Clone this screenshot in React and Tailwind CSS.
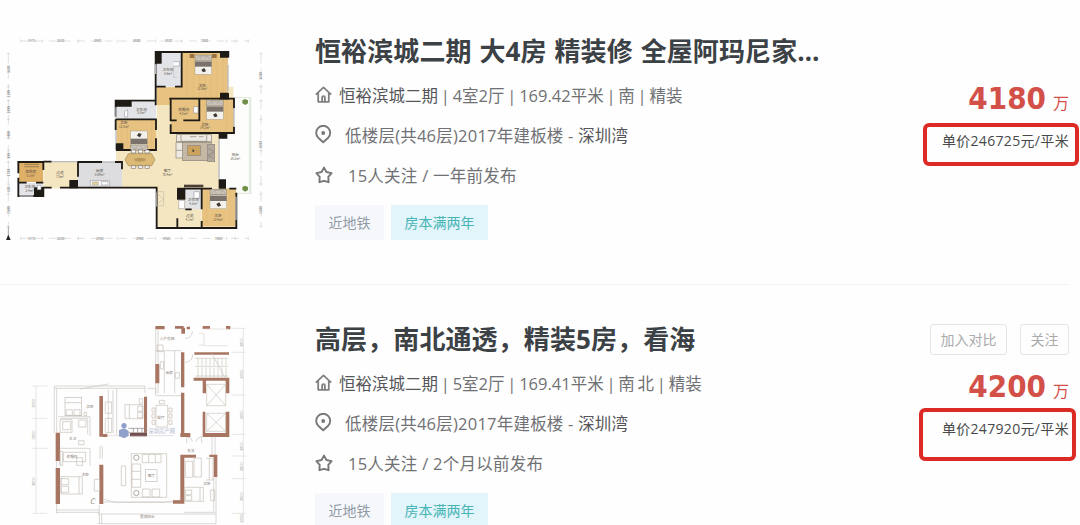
import clsx from 'clsx';

const WALL = '#1e1b17';
const WOOD = '#e7c281';
const TILE = '#e3e4e8';
const BRICK = '#a87562';

function HomeIcon() {
  return (
    <svg className="-mt-[3px] h-[17px] w-[17px] shrink-0" viewBox="0 0 17 17" fill="none" stroke="#808083" strokeWidth="1.8" strokeLinejoin="round">
      <path d="M.8 8.6 8.5 1.4 16.2 8.6M3.2 7v8.8h10.6V7" />
      <path d="M7.1 15.5v-4a1.4 1.4 0 0 1 2.8 0v4" />
    </svg>
  );
}

function PinIcon() {
  return (
    <svg className="-mt-[4px] h-[19px] w-[17px] shrink-0" viewBox="0 0 17 19" fill="none" stroke="#77777a" strokeWidth="1.9" strokeLinejoin="round">
      <path d="M8.2 17.3 3.2 12.7A7 7 0 1 1 13.2 12.7Z" />
      <circle cx="8.2" cy="8" r="1.9" fill="#77777a" stroke="none" />
    </svg>
  );
}

function StarIcon() {
  return (
    <svg className="-mt-[3px] h-[18px] w-[18px] shrink-0" viewBox="0 0 18 18" fill="none" stroke="#77777a" strokeWidth="1.9" strokeLinejoin="round">
      <path d="M9 1.6 11.4 6 16.6 7.1 13.3 10.8 13.6 16.2 9 14.8 4.4 16.2 4.7 10.8 1.4 7.1 6.6 6Z" />
    </svg>
  );
}

function Bed({ x, y, flip }) {
  return (
    <g transform={flip ? `translate(${x} ${y + 58}) scale(1 -1)` : `translate(${x} ${y})`}>
      <rect width="50" height="16" fill="#c9c3ba" stroke="#665a4a" />
      <path d="M3 13 14 3h22l11 10M14 3l5 10M36 3l-5 10" fill="none" stroke="#8d8578" />
      <rect y="17" width="50" height="41" fill="#f3f1ec" stroke="#8d8578" />
      <rect y="19" width="50" height="16" fill="#7b736b" />
      <path d="m19 44 9-5 5 10-9 3Z" fill="#3d3833" />
    </g>
  );
}

function Label({ x, y, children, size = 11, fill = '#5a5348' }) {
  return (
    <text x={x} y={y} fontSize={size} fill={fill} textAnchor="middle">{children}</text>
  );
}

function ColorPlan() {
  const ticks = [62, 128, 235, 352, 467, 545, 680, 706, 745];
  const leftTicks = [70, 170, 212, 268, 362, 396, 462, 492, 590];
  return (
    <svg className="h-[220px] w-[270px]" viewBox="0 0 810 660" fontFamily='"Noto Sans CJK SC", sans-serif'>
      <g stroke="#c3c3c3" strokeWidth="1.5">
        <path d="M62 33H745M62 625H745" strokeDasharray="24 18" />
        <path d="M25 70V590M783 70V590" strokeDasharray="30 16" />
        {ticks.map(t => <path key={t} d={`M${t} 28v10M${t} 620v10`} />)}
        {leftTicks.map(t => <path key={t} d={`M20 ${t}h10M778 ${t}h10`} />)}
      </g>
      {['1475', '2680', '2980', '2900', '1920', '3300'].map((t, i) => (
        <g key={t}>
          <Label x={[95, 182, 293, 410, 506, 613][i]} y={37} size={10} fill="#777">{t}</Label>
          <Label x={[95, 182, 300, 420, 500, 655][i]} y={629} size={10} fill="#777">{t}</Label>
        </g>
      ))}
      {[[118, '3300'], [192, '1100'], [240, '1400'], [315, '2400'], [378, '900'], [428, '1700'], [478, '800'], [540, '2500']].map(([y, t]) => (
        <text key={y} transform={`translate(29 ${y}) rotate(-90)`} fontSize="10" fill="#777" textAnchor="middle">{t}</text>
      ))}
      {[[138, '3600'], [344, '6800'], [540, '2500']].map(([y, t]) => (
        <text key={y} transform={`translate(787 ${y}) rotate(-90)`} fontSize="10" fill="#777" textAnchor="middle">{t}</text>
      ))}
      <path d="M25 590V630" stroke="#777" strokeWidth="2" />
      <path d="m25 614 7 16H18Z" fill="#222" />

      <path d="M700 203H752V490H706V475H657V310H700Z" fill="#fdfefb" stroke="#c8d6c1" strokeWidth="2" />
      <path d="M748 208V486" stroke="#e2ecdb" strokeWidth="3" />
      <g fill="#718f48">
        <path d="m735 207 9 4v9l-8 5-9-5v-9Z" />
        <path d="m735 467 9 4v9l-8 5-9-5v-9Z" />
      </g>

      <path d="M470 170H700V310H657V475H605V590H470V475H130V395H348V270H470Z" fill="#f5e6c2" />
      <path d="M545 68H684V205H510V225H470V172H545Z" fill={WOOD} />
      <rect x="470" y="68" width="75" height="102" fill={TILE} />
      <rect x="512" y="207" width="88" height="64" fill={WOOD} />
      <path d="M600 207H702V308H512V271H600Z" fill={WOOD} />
      <rect x="350" y="215" width="118" height="52" fill={TILE} />
      <rect x="350" y="270" width="118" height="88" fill={WOOD} />
      <rect x="232" y="397" width="134" height="76" fill="#dddde0" />
      <rect x="57" y="398" width="72" height="58" fill="#dfb068" />
      <rect x="57" y="459" width="72" height="38" fill={TILE} />
      <rect x="556" y="476" width="49" height="62" fill={TILE} />
      <rect x="606" y="476" width="102" height="114" fill={WOOD} />
      <g stroke="#d4a75b" strokeWidth="1" opacity=".5">
        <path d="M562 70V205M580 70V205M598 130V205M616 130V205M634 130V205M652 70V205M670 70V205M365 270V358M382 270V358M455 270V358M615 207V308M680 207V308M620 476V590M690 476V590" />
      </g>

      <g fill="none" stroke={WALL} strokeWidth="5.5">
        <path d="M467 226V66H685V82M684 190V206H508M545 66V170H525M497 170H467" />
        <path d="M347 260V212H468M347 268H468V300M347 300V268M468 325V360H432M348 360H400" />
        <path d="M512 205V271H530M550 271H598V207M658 206H702V235M702 290V309H512V283" />
        <path d="M55 430V396H130V420M55 443V498H130V473H155M55 458H80M108 458H130M180 473H470V594H709V488" />
        <path d="M366 418V396H345M306 396H234V440M130 395H155" />
        <path d="M532 476H636M688 476H709M532 594V565M556 538H575M605 594V573M605 538V476" />
      </g>
      <g fill={WALL}>
        <path d="M465 65h20v36h-20zM660 65h26v18h-26zM660 188h26v19h-26zM347 210h48v20h-48zM347 340h23v20h-23zM656 309h26v17h-26zM656 448h22v28h-22zM531 474h25v35h-25zM208 450h26v25h-26zM102 472h30v28h-30z" />
      </g>
      <g stroke="#bcbcc0" strokeWidth="4">
        <path d="M467 103V132M684 105V182M702 236V288M348 232V264M348 300V338M468 490V530M58 498H100M708 500V570M155 395H232M306 396H345M657 328V446" />
      </g>

      <Bed x={585} y={75} />
      <Bed x={620} y={210} />
      <Bed x={630} y={478} />
      <Bed x={392} y={303} flip />
      <path d="M569 72h14v12h-14zM636 72h14v12h-14z" fill="#9a7440" />

      <g>
        <path d="M385 371h70l10 18-10 18h-70l-10-18Z" fill="#dcb975" stroke="#a08a5d" strokeWidth="2" />
        <ellipse cx="420" cy="389" rx="18" ry="6" fill="#b99a5c" />
        <g fill="#fff" stroke="#777067" strokeWidth="2">
          {[394, 415, 435].map(x => <path key={x} d={`M${x} 360h13v9h-13zM${x} 407h13v8h-13z`} />)}
        </g>
      </g>

      <g stroke="#8a837b" strokeWidth="2">
        <rect x="548" y="337" width="86" height="55" fill="#c5b9a6" />
        <rect x="530" y="314" width="104" height="21" fill="#eeeae1" />
        <path d="M543 315v19h77v-19M570 320h20M597 320h14" fill="none" />
        <rect x="528" y="338" width="20" height="46" fill="#eeeae1" />
        <path d="M528 361h20" />
        <rect x="623" y="343" width="21" height="52" fill="#b3aa9d" />
        <path d="m624 355 18 9-18 12 18 10M624 385l18-18" fill="none" />
        <rect x="563" y="347" width="38" height="29" fill="#cba35e" />
        <path d="m577 358 7 4-6 5Z" fill="#333" stroke="none" />
      </g>
      <path d="M552 464h58v8h-58z" fill="#4b3e36" />

      <g fill="#fff" stroke="#85858a" strokeWidth="1.5">
        <path d="M521 95h17v13h-17M374 244l9-5v22h-9ZM581 230h13v19h-13ZM271 452h58v16h-58zM304 455h20v10h-20zM112 466h11v13h-11zM582 485h16v20h-16zM536 511h18v25h-18z" />
        <path d="M470 485h21v42h-21zM470 488l20 19-20 18M521 108v34h10" fill="none" stroke="#b5b0a6" />
      </g>
      <path d="M73 403h44M73 410h44" stroke="#a9854f" strokeWidth="4" />
      <path d="M277 456h18v9h-18z" fill="#e7d59e" stroke="#777" />

      {[
        ['卫生间', '5.6m²', 504, 123], ['主卧', '21.6m²', 607, 170], ['衣帽间', '4.2m²', 551, 244],
        ['次卧', '14.1m²', 615, 287], ['卫生间', '5.8m²', 424, 242], ['次卧', '12.5m²', 372, 283],
        ['阳台', '25.2m²', 706, 379], ['客厅', '70.4m²', 502, 427], ['厨房', '8.69m²', 299, 427],
        ['过道', '7.5m²', 180, 432], ['保姆房', '5.1m²', 92, 429], ['卫生间', '2.4m²', 89, 475],
        ['卫生间', '4.2m²', 580, 514], ['过道', '4.1m²', 569, 562], ['主卧', '13.4m²', 654, 562],
      ].map(([name, area, x, y]) => (
        <g key={`${x}-${y}`}>
          <Label x={x} y={y}>{name}</Label>
          <Label x={x} y={y + 11} size={9}>{area}</Label>
        </g>
      ))}
    </svg>
  );
}

function LinePlan() {
  return (
    <svg className="h-[223px] w-[270px]" viewBox="0 -24 810 669" fontFamily='"Noto Sans CJK SC", sans-serif'>
      <g stroke="#d3ceca" strokeWidth="1.5" fill="none">
        <path d="M108 228V610M730 55V640" />
        {[228, 325, 415, 610].map(y => <path key={y} d={`M98 ${y}h44`} />)}
        {[55, 127, 255, 373, 438, 506, 610].map(y => <path key={y} d={`M695 ${y}h42`} />)}
      </g>
      {[[106, 280], [106, 375], [106, 515], [729, 98], [729, 193], [729, 315], [729, 410], [729, 470], [729, 560], [729, 625]].map(([x, y]) => (
        <text key={`${x}-${y}`} transform={`translate(${x} ${y}) rotate(-90)`} fontSize="12" fill="#b4aeaa" textAnchor="middle">3800</text>
      ))}

      <g fill="none" stroke="#c8c4be" strokeWidth="2">
        <path d="M467 60V250M474 60V250M467 122H545M493 122V250M524 122V250M467 257H545M163 228H435M163 235H435M163 228V370M170 235V370M350 235V375M325 240V370M339 240V370M435 228V250M442 235H467V255" />
        <path d="M170 370V610M167 607H298M167 600H298M298 585V642M305 612V642M293 612H648M293 641H648M648 500V640M641 500V605M553 607H645M636 380V435M645 380V435M312 568 345 577H490L540 570M312 576H520" />
        <path d="M240 237 325 222M440 257V370M545 250V372M175 320H270V378M180 415H270V467M180 325H263M263 325V372M180 420V467" />
        <path d="M560 380v20M605 380v20M560 380q15 2 18 15M605 380q-15 2-18 15M555 85q22 0 22-22M555 157q23-2 23-24M300 408v38M307 408v38" />
      </g>

      <g fill={BRICK}>
        <path d="M466 48h28v10h-28zM525 48h26v8h-26zM544 53h11v18h-11zM560 50h10v8h-10zM608 48h22v9h-22zM678 48h13v10h-13zM466 162h12v58h-12zM543 127h10v105h-10zM583 127h104v7h-104zM543 248h10v132h-10zM581 203h107v9h-107zM608 212h10v38h-10zM677 212h11v38h-11zM608 305h8v70h-8zM677 305h11v70h-11zM608 369h80v12h-80zM541 369h30v12h-30zM298 258h11v122h-11zM432 260h9v115h-9zM309 372h13v9h-13zM167 368h13v85h-13zM167 474h13v108h-13zM298 464h12v118h-12zM541 434h47v9h-47zM541 443h12v137h-12zM519 571h34v10h-34zM641 434h11v67h-11zM628 434h18v7h-18z" />
      </g>
      <path d="M390 374H441" stroke="#744b4c" strokeWidth="10" />
      <path d="M385 355h53v13h-53M400 355v13M413 355v13M426 355v13" fill="none" stroke="#8d817c" strokeWidth="2" />

      <g fill="none" stroke="#c4bcb4" strokeWidth="2">
        <rect x="195" y="262" width="50" height="55" />
        <path d="M195 278h50M199 299h18v17h-18zM222 299h18v17h-18zM252 307h8v10h-8z" />
        <path d="M375 284h54v42h-54zM388 284v42M413 288h14v16h-14zM413 307h14v16h-14zM418 266h10v14h-10z" />
        <path d="M468 286h35v65h-35zM456 294h9v12h-9zM456 312h9v12h-9zM456 331h9v12h-9zM507 294h9v12h-9zM507 312h9v12h-9zM507 331h9v12h-9zM478 271h15v10h-15z" />
        <path d="M180 329h36v38h-36zM188 335h24v24h-24zM236 330h22v21h-22zM236 392h16v12h-16zM316 276h19v34h-19zM316 325h19v43h-19z" />
        <path d="M190 427h67v28h-67zM180 424h8v42h-8zM230 443h18v23h-18z" />
        <path d="M183 500h64v52h-64zM183 506h23v18h-23zM183 529h23v18h-23zM237 500v52M283 508h16v35h-16z" />
        <path d="M364 468h13v59h-13zM394 431h106v131h-106zM396 462h26v70h-26zM396 484h26M396 508h26M427 433h56v25h-56zM446 433v25M466 433v25M427 537h23v24h-23zM456 537h23v24h-23z" />
        <rect x="437" y="479" width="34" height="36" />
        <circle cx="409" cy="443" r="8" stroke="#8c8178" />
        <circle cx="409" cy="549" r="8" stroke="#8c8178" />
        <path d="M556 454h22v48h-22zM582 444h22v57h-22zM553 532h57v42h-57zM600 532v42M556 540h19v14h-19zM556 557h19v14h-19zM629 445h10v65h-10M618 445h10v65h-10M632 540h12v32h-12z" />
        <path d="M471 105h18v20h-18zM481 155h10v22h-10zM526 188h12v17h-12z" />
        <path d="M597 70h15v35h-15M608 107h76M610 57h75" stroke="#ddd8d2" />
      </g>
      <g stroke="#c8c5b9" strokeWidth="2" fill="none">
        <path d="M586 145H684M586 169H684M586 198H684M635 130 675 203" />
        {[594, 606, 618, 630, 642, 654, 666, 678].map(x => <path key={x} d={`M${x} 145V166M${x} 172V203`} />)}
        <path d="M620 223h57v64h-57zM620 310h57v54h-57zM620 223l57 64M677 223l-57 64M620 310l57 54M677 310l-57 54" />
      </g>

      <g fill="#8fa0cd">
        <circle cx="372" cy="347" r="8" />
        <path d="m357 360 16-5 13 8v14l-13 8-16-6Z" />
      </g>
      <Label x={485} y={368} size={16} fill="#b3b7cd">深圳房产网</Label>
      <path d="M320 377H520" stroke="#b3a7b5" />
      <text x="269" y="581" fontSize="23" fontStyle="italic" fill="#988e86">C</text>
      {[
        ['入户花园', 501, 89], ['厨房', 508, 192], ['餐厅', 483, 328], ['次卧', 270, 293],
        ['主卫', 218, 390], ['衣帽间', 216, 443], ['主卧', 256, 497], ['客厅', 454, 501],
        ['玄关', 573, 427], ['次卧', 621, 525], ['景观阳台', 442, 625],
      ].map(([name, x, y]) => <Label key={`${x}-${y}`} x={x} y={y} size={11} fill="#8c8179">{name}</Label>)}
    </svg>
  );
}

const listings = [
  {
    id: 1,
    plan: <ColorPlan />,
    title: '恒裕滨城二期 大4房 精装修 全屋阿玛尼家…',
    specs: ' | 4室2厅 | 169.42平米 | 南 | 精装',
    published: '15人关注 / 一年前发布',
    price: '4180',
    unitPrice: '单价246725元/平米',
    mark: 'top-[123px] left-[923px] h-[43px] w-[156px]',
  },
  {
    id: 2,
    plan: <LinePlan />,
    title: '高层，南北通透，精装5房，看海',
    specs: ' | 5室2厅 | 169.41平米 | 南 北 | 精装',
    published: '15人关注 / 2个月以前发布',
    price: '4200',
    unitPrice: '单价247920元/平米',
    mark: 'top-[120px] left-[919px] h-[53px] w-[157px]',
    actions: true,
  },
];

function Listing({ item }) {
  return (
    <article className="relative flex h-[288px] w-[1080px]">
      <div className={clsx('w-[315px] shrink-0', item.actions ? 'pt-[14px]' : 'pt-[30px]')}>{item.plan}</div>

      <div className="w-[555px] shrink-0 pt-[31px] text-[16.5px] text-[#707174]">
        <h2 className="h-[40px] text-[26px] leading-[40px] font-bold tracking-[0.1px] whitespace-nowrap text-[#3b4145] [word-spacing:1px]">{item.title}</h2>
        <div className="mt-[5px] flex h-[40px] items-center gap-[7px] whitespace-pre">
          <HomeIcon />
          <p className="[word-spacing:-1.5px]"><span className="text-[#55565a]">恒裕滨城二期</span>{item.specs}</p>
        </div>
        <div className="flex h-[40px] items-center gap-[13px] tracking-[0.22px] whitespace-pre">
          <PinIcon />
          <p>低楼层(共46层)2017年建板楼 - <span className="text-[#55565a]">深圳湾</span></p>
        </div>
        <div className="flex h-[40px] items-center gap-[15px] tracking-[0.25px] whitespace-pre">
          <StarIcon />
          <p>{item.published}</p>
        </div>
        <div className="mt-[9px] flex gap-[7px] text-[14px] leading-[35px]">
          <span className="w-[69px] bg-[#f5f7fb] text-center text-[#929ba6]">近地铁</span>
          <span className="w-[97px] bg-[#e1f5fa] text-center text-[#48b4b5]">房本满两年</span>
        </div>
      </div>

      <div className="w-[199px] shrink-0 pt-[36px] text-right">
        <div className="flex h-[31px] justify-end gap-[13px] text-[14px] leading-[28px] text-[#aaaaad]">
          {item.actions && (
            <>
              <button className="w-[77px] rounded-[3px] border border-[#e6e3ea]">加入对比</button>
              <button className="w-[49px] rounded-[3px] border border-[#e6e3ea]">关注</button>
            </>
          )}
        </div>
        <div className="mt-[11px] flex h-[41px] items-baseline justify-end gap-[7px] leading-[40px] text-[#d35049]">
          <strong className="font-['DejaVu_Sans_Condensed','DejaVu_Sans',sans-serif] text-[31px] font-bold [font-stretch:condensed]">{item.price}</strong>
          <span className="text-[16px]">万</span>
        </div>
        <p className="h-[44px] text-[14px] leading-[44px] tracking-[0.33px] whitespace-nowrap text-[#48494b]">{item.unitPrice}</p>
      </div>

      <div className={clsx('absolute rounded-[6px] border-4 border-[#dc2b27]', item.mark)} />
    </article>
  );
}

export default function App() {
  return (
    <main className="h-[525px] w-[1080px] overflow-hidden bg-[#fefefe] font-['Open_Sans','Noto_Sans_CJK_SC',sans-serif]">
      <Listing item={listings[0]} />
      <hr className="-mt-[4px] mb-[3px] w-[1069px] border-[#f2f2f3]" />
      <Listing item={listings[1]} />
    </main>
  );
}
